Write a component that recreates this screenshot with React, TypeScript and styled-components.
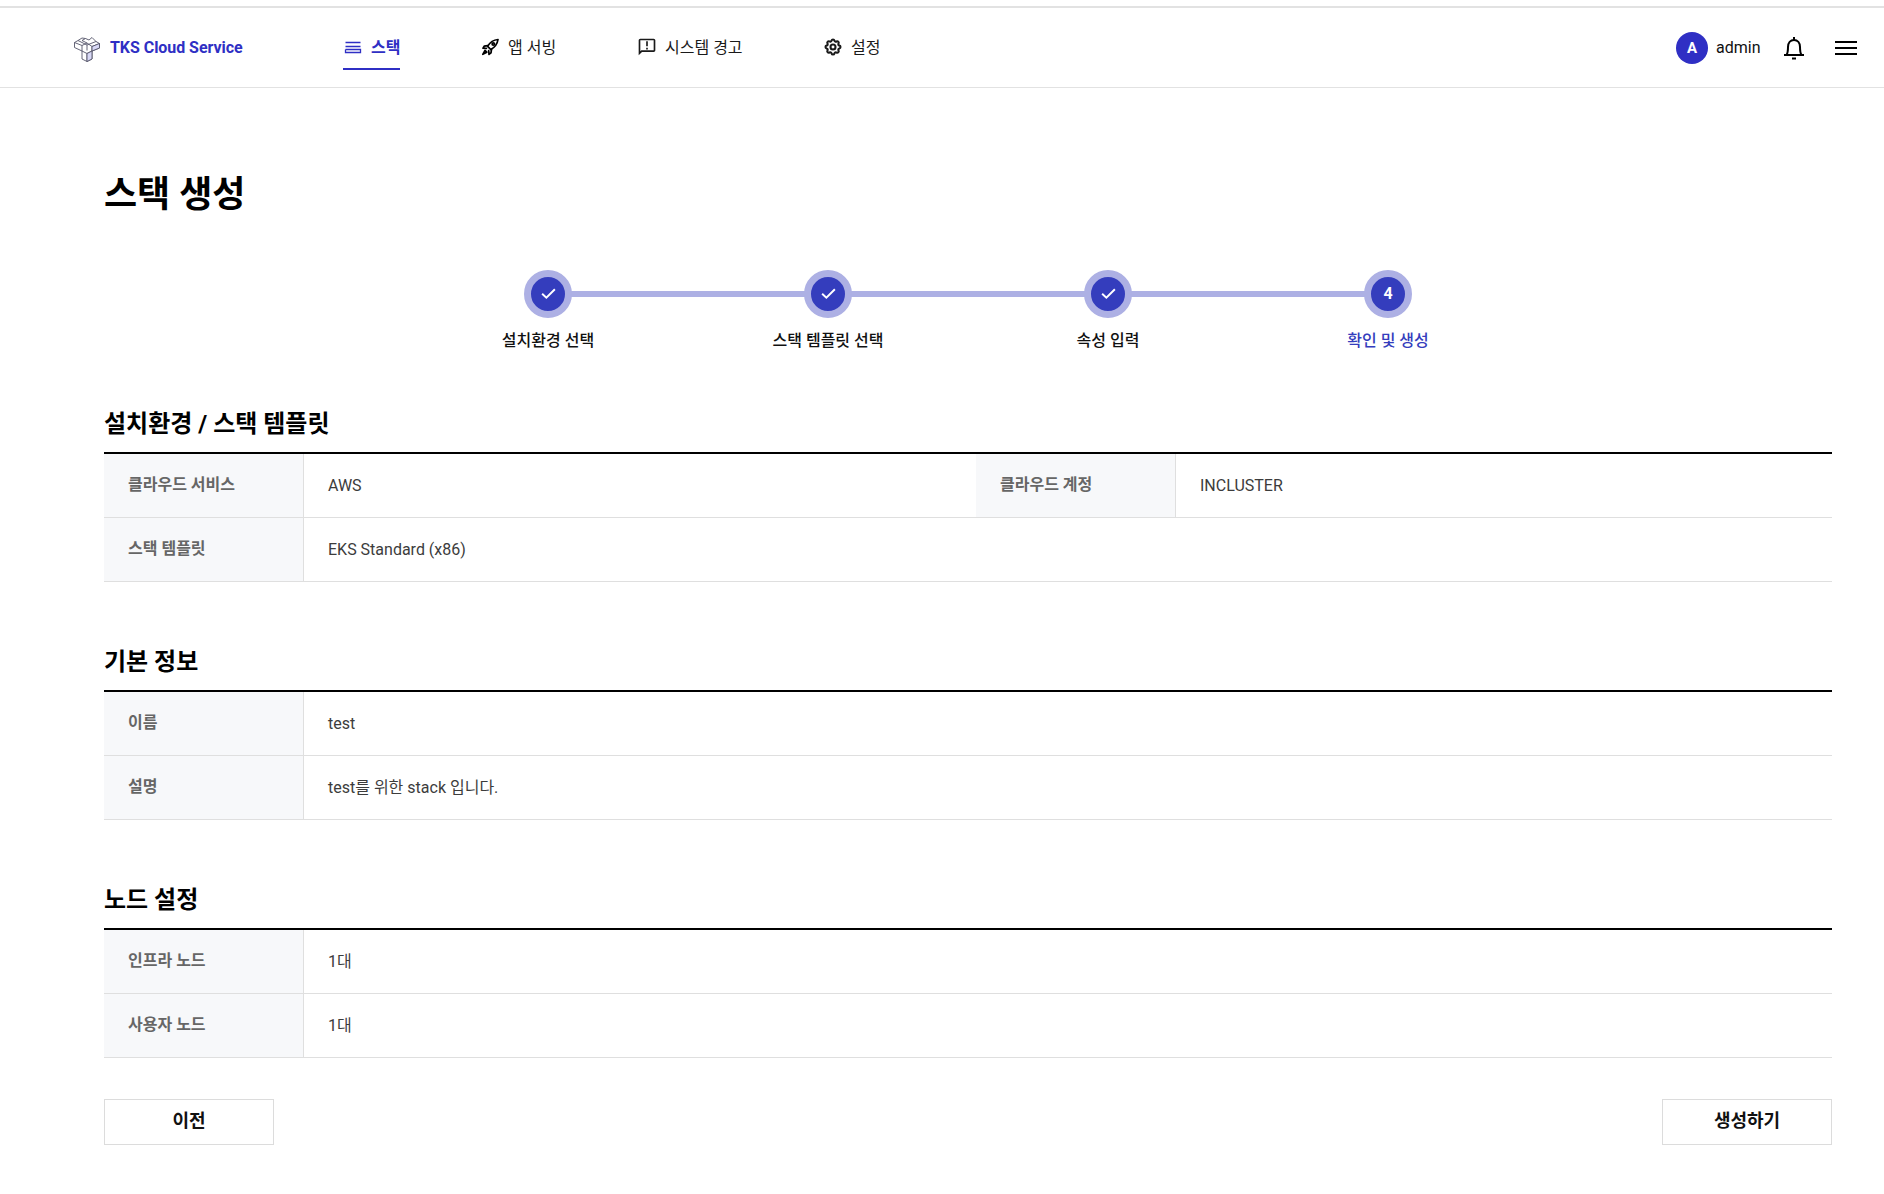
import React from "react";
import styled, { createGlobalStyle } from "styled-components";
import { MdOutlineAnnouncement } from "react-icons/md";
import { TbSettings } from "react-icons/tb";

const Global = createGlobalStyle`
  html, body { margin: 0; padding: 0; background: #fff; }
  body { font-family: Roboto, "Noto Sans CJK KR", sans-serif; color: #111; }
  * { box-sizing: border-box; }
`;

const Shell = styled.div`
  padding-top: 6px;
  height: 1194px;
  overflow: hidden;
`;

const Header = styled.header`
  height: 82px;
  border-top: 2px solid #e2e2e2;
  border-bottom: 1px solid #e2e2e2;
  padding: 0 27px 0 73px;
  display: flex;
  align-items: center;
`;

const Brand = styled.div`
  width: 270px;
  display: flex;
  align-items: center;
  gap: 9px;
  font-size: 16px;
  font-weight: 700;
  letter-spacing: -0.05px;
  color: #2f2fc4;
`;

const Nav = styled.nav`
  display: flex;
  align-items: center;
  height: 100%;
`;

const NavItem = styled.a<{ $width: number }>`
  width: ${(p) => p.$width}px;
  height: 100%;
  display: flex;
  align-items: center;
`;

const NavInner = styled.span<{ $active?: boolean }>`
  height: 48px;
  margin-bottom: 3px;
  padding-top: 2px;
  display: flex;
  align-items: center;
  gap: 8px;
  font-size: 16px;
  color: ${(p) => (p.$active ? "#2f2fc4" : "#1a1a1a")};
  font-weight: ${(p) => (p.$active ? 700 : 400)};
  border-bottom: 2px solid ${(p) => (p.$active ? "#2f2fc4" : "transparent")};
  svg { flex: none; margin-top: 2px; }
`;

const Right = styled.div`
  margin-left: auto;
  display: flex;
  align-items: center;
`;

const Avatar = styled.div`
  width: 32px;
  height: 32px;
  margin-left: -1px;
  border-radius: 50%;
  background: #2f2fc4;
  color: #fff;
  display: flex;
  align-items: center;
  justify-content: center;
  font-size: 15px;
  font-weight: 700;
`;

const UserName = styled.span`
  margin-left: 8px;
  width: 55px;
  font-size: 16px;
  color: #111;
`;

const IconBox = styled.span<{ $left: number }>`
  margin-left: ${(p) => p.$left}px;
  display: flex;
  color: #000;
`;

const Main = styled.main`
  padding: 0 52px 0 104px;
`;

const PageTitle = styled.h1`
  margin: 85px 0 0;
  font-size: 36px;
  line-height: 44px;
  font-weight: 700;
  color: #000;
`;

const Stepper = styled.div`
  margin: 53px auto 0;
  width: 1120px;
  display: grid;
  grid-template-columns: repeat(4, 1fr);
`;

const Step = styled.div<{ $first?: boolean }>`
  display: flex;
  flex-direction: column;
  align-items: center;
  position: relative;
  &::before {
    content: "";
    display: ${(p) => (p.$first ? "none" : "block")};
    position: absolute;
    left: -50%;
    right: 50%;
    top: 21px;
    height: 6px;
    background: #adb0e4;
  }
`;

const Circle = styled.div`
  position: relative;
  z-index: 1;
  width: 48px;
  height: 48px;
  border-radius: 50%;
  background: #343dbd;
  border: 7px solid #adb0e4;
  color: #fff;
  display: flex;
  align-items: center;
  justify-content: center;
  padding-bottom: 1px;
  font-size: 16px;
  line-height: 20px;
  font-weight: 700;
`;

const StepLabel = styled.div<{ $current?: boolean }>`
  margin-top: 12px;
  font-size: 16px;
  line-height: 22px;
  font-weight: 500;
  color: ${(p) => (p.$current ? "#343dbd" : "#111")};
`;

const Section = styled.section<{ $top: number }>`
  margin-top: ${(p) => p.$top}px;
`;

const SectionTitle = styled.h2`
  margin: 0 0 11px;
  height: 34px;
  font-size: 24px;
  line-height: 34px;
  font-weight: 700;
  color: #000;
`;

const Table = styled.div`
  border-top: 2px solid #000;
`;

const Row = styled.div`
  display: flex;
  height: 64px;
  border-bottom: 1px solid #dfdfdf;
`;

const Label = styled.div`
  flex: none;
  width: 200px;
  background: #f7f8fa;
  border-right: 1px solid #dfdfdf;
  padding: 0 0 1px 24px;
  display: flex;
  align-items: center;
  font-size: 16px;
  line-height: 20px;
  font-weight: 700;
  color: #666;
`;

const Value = styled.div<{ $width?: number }>`
  ${(p) => (p.$width ? `width: ${p.$width}px; flex: none;` : "flex: 1;")}
  padding-left: 24px;
  display: flex;
  align-items: center;
  font-size: 16px;
  line-height: 20px;
  color: #3c3c3c;
`;

const Actions = styled.div`
  margin-top: 41px;
  display: flex;
  justify-content: space-between;
`;

const Button = styled.button`
  width: 170px;
  height: 46px;
  padding: 0 0 2px;
  background: #fff;
  border: 1px solid #dcdcdc;
  border-radius: 0;
  font-family: inherit;
  font-size: 18px;
  line-height: 24px;
  font-weight: 700;
  color: #111;
`;

const Logo = () => (
  <svg width="28" height="28" viewBox="0 0 28 28" fill="none" stroke="#55556a" strokeWidth="0.9" strokeLinejoin="round">
    <path d="M14 11 L23 7.5 L26.5 9.5 V14 L19 17 V25 L14 27.5 L9 25 V17 L1.5 13.5 V8.5 L5 6.5 Z" />
    <path d="M19 17 L14 19.5 V27.5 M26.5 9.5 L19 12.5 V17" />
    <path d="M19 12.5 V17 L26.5 14 V9.5 Z" fill="#d8d8f6" />
    <path d="M14 19.5 L19 17 V25 L14 27.5 Z" fill="#d8d8f6" />
    <path d="M1.5 8.5 L9 11.5 V17 M9 11.5 L14 9 L9 6.5 L12.5 4.5 L16 6 M5 6.5 L9 4 L12.5 4.5 M9 17 L14 19.5 M14 9 L19 12.5 M16 6 L19 3.5 L23 7.5 M14 11 V16.5" />
  </svg>
);

const StackIcon = () => (
  <svg width="20" height="20" viewBox="0 0 20 20" fill="none" stroke="#2f2fc4" strokeWidth="1.3">
    <path d="M2.5 5.5 H17.5 M2.5 9.5 H17.5 M2.5 12.5 H17.5 V15.5 H2.5 V12.5" />
  </svg>
);

const RocketIcon = () => (
  <svg width="20" height="20" viewBox="0 0 20 20" fill="none" stroke="#000" strokeWidth="1.7" strokeLinejoin="round" strokeLinecap="round">
    <path d="M18 2.5 C13.5 2.8 10.2 5 7.6 9.3 L10.9 12.6 C15.2 10 17.4 6.8 18 2.5 Z" />
    <path d="M7.8 8.6 L4.2 9.2 L3 11.2 L6.4 11.4" />
    <path d="M11.5 12.4 L11 15.8 L9 17.4 L8.7 13.7" />
    <circle cx="13.3" cy="7" r="1.2" />
    <path d="M5 13.4 L2.8 17.3 L6.8 15.2 Z" fill="#000" />
  </svg>
);

const Check = () => (
  <svg width="17" height="13" viewBox="0 0 16 12" fill="none" stroke="#fff" strokeWidth="1.8">
    <path d="M2 6.2 L6 10 L14 2" />
  </svg>
);

const Bell = () => (
  <svg width="26" height="28" viewBox="0 0 26 28" fill="none" stroke="#000" strokeWidth="2" strokeLinejoin="round">
    <path d="M5.5 21 C6.8 19 7 17 7 13 C7 9 9.5 6 13 6 C16.5 6 19 9 19 13 C19 17 19.2 19 20.5 21 H23 M5.5 21 H3 M5.5 21 H20.5" />
    <path d="M13 3 V6" />
    <path d="M11 24.5 H15" strokeWidth="2" />
  </svg>
);

const Menu = () => (
  <svg width="22" height="14" viewBox="0 0 22 14" fill="#000">
    <rect width="22" height="2" y="0" />
    <rect width="22" height="2" y="6" />
    <rect width="22" height="2" y="12" />
  </svg>
);

const Info = ({ rows }: { rows: { label: string; value: string; label2?: string; value2?: string }[] }) => (
  <Table>
    {rows.map((r) => (
      <Row key={r.label}>
        <Label>{r.label}</Label>
        <Value $width={r.label2 ? 672 : undefined}>{r.value}</Value>
        {r.label2 && <Label>{r.label2}</Label>}
        {r.value2 && <Value>{r.value2}</Value>}
      </Row>
    ))}
  </Table>
);

const steps = ["설치환경 선택", "스택 템플릿 선택", "속성 입력", "확인 및 생성"];

export default function App() {
  return (
    <Shell>
      <Global />
      <Header>
        <Brand>
          <Logo />
          TKS Cloud Service
        </Brand>
        <Nav>
          <NavItem $width={137}>
            <NavInner $active>
              <StackIcon />
              스택
            </NavInner>
          </NavItem>
          <NavItem $width={157}>
            <NavInner>
              <RocketIcon />
              앱 서빙
            </NavInner>
          </NavItem>
          <NavItem $width={186}>
            <NavInner>
              <MdOutlineAnnouncement size={20} />
              시스템 경고
            </NavInner>
          </NavItem>
          <NavItem $width={80}>
            <NavInner>
              <TbSettings size={20} strokeWidth={2.5} />
              설정
            </NavInner>
          </NavItem>
        </Nav>
        <Right>
          <Avatar>A</Avatar>
          <UserName>admin</UserName>
          <IconBox $left={10}>
            <Bell />
          </IconBox>
          <IconBox $left={28}>
            <Menu />
          </IconBox>
        </Right>
      </Header>
      <Main>
        <PageTitle>스택 생성</PageTitle>
        <Stepper>
          {steps.map((s, i) => (
            <Step key={s} $first={i === 0}>
              <Circle>{i < 3 ? <Check /> : "4"}</Circle>
              <StepLabel $current={i === 3}>{s}</StepLabel>
            </Step>
          ))}
        </Stepper>
        <Section $top={55}>
          <SectionTitle>설치환경 / 스택 템플릿</SectionTitle>
          <Info
            rows={[
              { label: "클라우드 서비스", value: "AWS", label2: "클라우드 계정", value2: "INCLUSTER" },
              { label: "스택 템플릿", value: "EKS Standard (x86)" },
            ]}
          />
        </Section>
        <Section $top={63}>
          <SectionTitle>기본 정보</SectionTitle>
          <Info
            rows={[
              { label: "이름", value: "test" },
              { label: "설명", value: "test를 위한 stack 입니다." },
            ]}
          />
        </Section>
        <Section $top={63}>
          <SectionTitle>노드 설정</SectionTitle>
          <Info
            rows={[
              { label: "인프라 노드", value: "1대" },
              { label: "사용자 노드", value: "1대" },
            ]}
          />
        </Section>
        <Actions>
          <Button>이전</Button>
          <Button>생성하기</Button>
        </Actions>
      </Main>
    </Shell>
  );
}
